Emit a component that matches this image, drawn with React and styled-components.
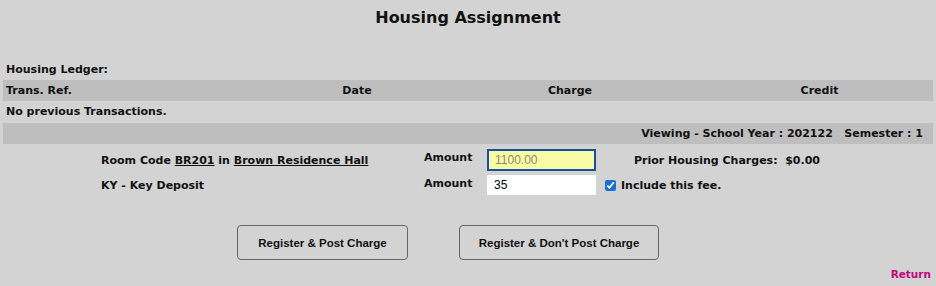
import React from 'react';
import styled, { createGlobalStyle } from 'styled-components';

const GlobalStyle = createGlobalStyle`
  html, body {
    margin: 0;
    padding: 0;
    background: #d3d3d3;
  }
  body {
    font-family: "DejaVu Sans", "Liberation Sans", sans-serif;
    font-weight: bold;
    font-size: 11px;
    color: #111;
  }
`;

const Page = styled.div`
  width: 936px;
  height: 286px;
  padding: 0 3px;
  box-sizing: border-box;
  display: flex;
  flex-direction: column;
`;

const Title = styled.h1`
  margin: 7px 0 0;
  height: 22px;
  text-align: center;
  font-size: 16px;
  line-height: 22px;
`;

const Label = styled.div`
  padding: 0 3px;
  height: 20px;
  line-height: 20px;
  margin-top: ${(p) => p.$top || 0}px;
`;

const Bar = styled.div`
  background: #bebebe;
  height: 21px;
  line-height: 21px;
  padding: 0 3px;
  display: ${(p) => (p.$grid ? 'grid' : 'block')};
  grid-template-columns: 277px 148px 278px 1fr;
  text-align: ${(p) => (p.$right ? 'right' : 'left')};
  padding-right: ${(p) => (p.$right ? '10px' : '3px')};
  margin-top: ${(p) => p.$top || 0}px;
`;

const Col = styled.span`
  text-align: ${(p) => p.$align || 'center'};
`;

const FormRow = styled.div`
  display: grid;
  grid-template-columns: 323px 63px 118px 1fr;
  align-items: center;
  padding-left: 98px;
  height: ${(p) => p.$h}px;
  margin-top: ${(p) => p.$top || 0}px;
`;

const Cell = styled.div`
  display: flex;
  align-items: center;
`;

const Under = styled.span`
  text-decoration: underline;
`;

const AmountLabel = styled.span`
  align-self: start;
  padding-top: 2px;
`;

const Input = styled.input`
  box-sizing: border-box;
  width: 109px;
  height: ${(p) => (p.$hi ? 22 : 20)}px;
  font-family: "Liberation Sans", Arial, sans-serif;
  font-size: 12px;
  padding: 0 6px;
  border: ${(p) => (p.$hi ? '2px solid #1c4e9e' : '1px solid #fff')};
  background: ${(p) => (p.$hi ? '#f8fba6' : '#fff')};
  color: ${(p) => (p.$hi ? '#8a8a6a' : '#000')};
  outline: none;
`;

const Prior = styled.span`
  padding-left: 29px;
`;

const Check = styled.input`
  margin: 1px 5px 0 0;
  width: 11px;
  height: 11px;
  accent-color: #1a6fd6;
`;

const Buttons = styled.div`
  display: flex;
  gap: 51px;
  padding-left: 234px;
  margin-top: 30px;
`;

const Button = styled.button`
  height: 35px;
  width: ${(p) => p.$w}px;
  font-family: "Liberation Sans", Arial, sans-serif;
  font-weight: bold;
  font-size: 11.5px;
  color: #111;
  background: #d3d3d3;
  border: 1px solid #666;
  border-radius: 4px;
`;

const Footer = styled.div`
  display: flex;
  justify-content: flex-end;
  padding-right: 2px;
  margin-top: 8px;
`;

const ReturnLink = styled.a`
  color: #c0087f;
  text-decoration: none;
  font-size: 10.5px;
`;

export default function App() {
  return (
    <Page>
      <GlobalStyle />
      <Title>Housing Assignment</Title>
      <Label $top={31}>Housing Ledger:</Label>
      <Bar $grid>
        <Col $align="left">Trans. Ref.</Col>
        <Col>Date</Col>
        <Col>Charge</Col>
        <Col>Credit</Col>
      </Bar>
      <Label $top={1}>No previous Transactions.</Label>
      <Bar $right $top={1}>Viewing - School Year : 202122&nbsp;&nbsp;&nbsp;Semester : 1</Bar>
      <FormRow $h={22} $top={5}>
        <Cell>
          <span>
            Room Code <Under>BR201</Under> in <Under>Brown Residence Hall</Under>
          </span>
        </Cell>
        <AmountLabel>Amount</AmountLabel>
        <Input $hi defaultValue="1100.00" />
        <Prior>Prior Housing Charges:&nbsp; $0.00</Prior>
      </FormRow>
      <FormRow $h={20} $top={4}>
        <Cell>KY - Key Deposit</Cell>
        <AmountLabel>Amount</AmountLabel>
        <Input defaultValue="35" />
        <Cell>
          <Check type="checkbox" defaultChecked />
          <span>Include this fee.</span>
        </Cell>
      </FormRow>
      <Buttons>
        <Button $w={171}>Register &amp; Post Charge</Button>
        <Button $w={200}>Register &amp; Don't Post Charge</Button>
      </Buttons>
      <Footer>
        <ReturnLink href="#">Return</ReturnLink>
      </Footer>
    </Page>
  );
}
